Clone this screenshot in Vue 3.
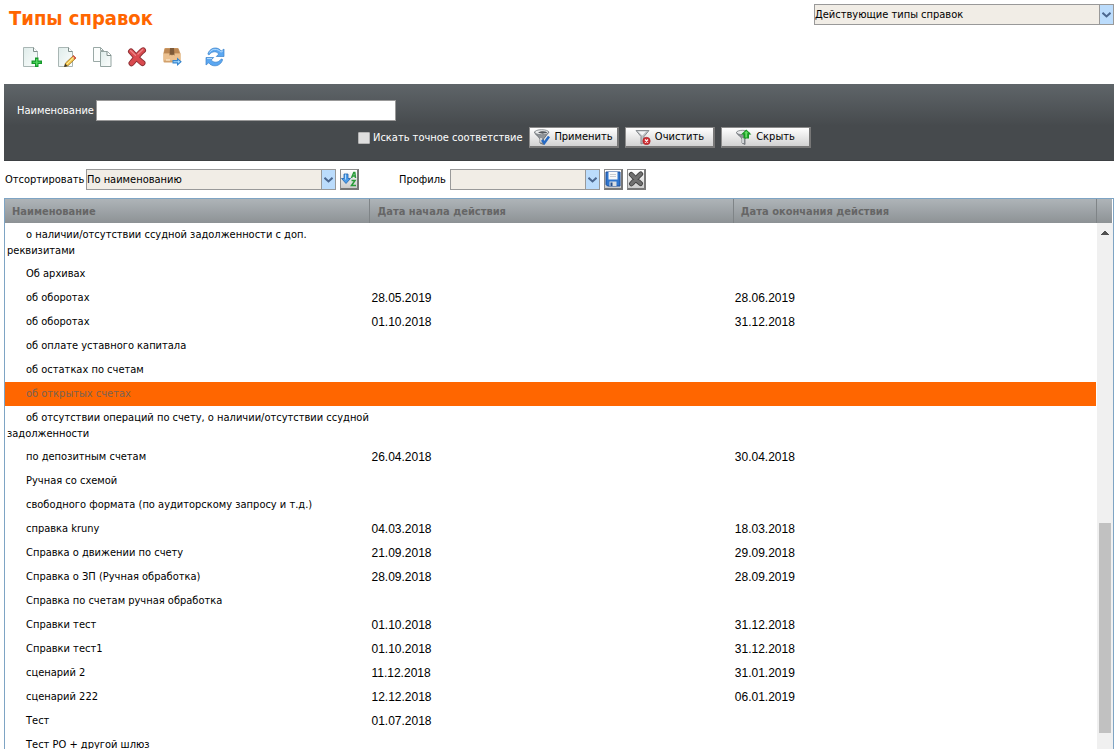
<script setup>
import { ref } from 'vue'

const status = ref('active')
const sortBy = ref('name')
const profile = ref('')
const nameFilter = ref('')
const exact = ref(false)
const selected = ref(6)

const rows = [
  { name: 'о наличии/отсутствии ссудной задолженности с доп.\nреквизитами', from: '', to: '' },
  { name: 'Об архивах', from: '', to: '' },
  { name: 'об оборотах', from: '28.05.2019', to: '28.06.2019' },
  { name: 'об оборотах', from: '01.10.2018', to: '31.12.2018' },
  { name: 'об оплате уставного капитала', from: '', to: '' },
  { name: 'об остатках по счетам', from: '', to: '' },
  { name: 'об открытых счетах', from: '', to: '' },
  { name: 'об отсутствии операций по счету, о наличии/отсутствии ссудной\nзадолженности', from: '', to: '' },
  { name: 'по депозитным счетам', from: '26.04.2018', to: '30.04.2018' },
  { name: 'Ручная со схемой', from: '', to: '' },
  { name: 'свободного формата (по аудиторскому запросу и т.д.)', from: '', to: '' },
  { name: 'справка kruny', from: '04.03.2018', to: '18.03.2018' },
  { name: 'Справка о движении по счету', from: '21.09.2018', to: '29.09.2018' },
  { name: 'Справка о ЗП (Ручная обработка)', from: '28.09.2018', to: '28.09.2019' },
  { name: 'Справка по счетам ручная обработка', from: '', to: '' },
  { name: 'Справки тест', from: '01.10.2018', to: '31.12.2018' },
  { name: 'Справки тест1', from: '01.10.2018', to: '31.12.2018' },
  { name: 'сценарий 2', from: '11.12.2018', to: '31.01.2019' },
  { name: 'сценарий 222', from: '12.12.2018', to: '06.01.2019' },
  { name: 'Тест', from: '01.07.2018', to: '' },
  { name: 'Тест РО + другой шлюз', from: '', to: '' },
]

const scroll = { top: 57, size: 40 }
</script>

<template>
  <main class="page">
    <header class="top">
      <h1>Типы справок</h1>
      <div class="combo combo-status">
        <select v-model="status" aria-label="Статус">
          <option value="active">Действующие типы справок</option>
        </select>
        <span class="arrow"><svg width="9" height="6" viewBox="0 0 9 6"><path d="M0.5 0.8 4.5 4.4 8.5 0.8" fill="none" stroke="#4b678f" stroke-width="2" /></svg></span>
      </div>
    </header>

    <nav class="toolbar" aria-label="Действия">
      <button type="button" aria-label="Создать">
        <svg width="20" height="20" viewBox="0 0 20 20">
          <defs><linearGradient id="paper" x1="0" y1="0" x2="1" y2="1"><stop offset="0" stop-color="#dfecea" /><stop offset="1" stop-color="#fcfefd" /></linearGradient></defs>
          <path d="M1.5 .5h10l4 4v15h-14z" fill="url(#paper)" stroke="#a9b6b4" />
          <path d="M11.5 .5v4h4" fill="#fff" stroke="#7e8e8b" />
          <path d="M13 10.5h3.5v3H20v3.5h-3.500v3H13v-3H9.500v-3.500H13z" fill="#16992c" />
          <path d="M14 12h1.500v2.700h3v1h-3v2.800H14v-2.800h-3v-1h3z" fill="#54d95f" />
        </svg>
      </button>
      <button type="button" aria-label="Изменить">
        <svg width="20" height="20" viewBox="0 0 20 20">
          <path d="M1.500 .5h10l4 4v15h-14z" fill="url(#paper)" stroke="#a9b6b4" />
          <path d="M11.500 .5v4h4" fill="#fff" stroke="#7e8e8b" />
          <path d="M8.500 16 16.500 8.500l2.500 2.500-8 7.700-3.500 1z" fill="#f4c64c" stroke="#9a7425" stroke-width=".8" />
          <path d="M15.200 9.700 16.500 8.300l2.700 2.700-1.500 1.500z" fill="#d8574f" />
          <path d="M10 17 17 10.300" stroke="#fff0a4" />
          <path d="m7.200 20 1-3.200 2.200 2.200z" fill="#333" />
        </svg>
      </button>
      <button type="button" aria-label="Копировать">
        <svg width="20" height="20" viewBox="0 0 20 20">
          <path d="M1.500 .5h7l3 3v11h-10z" fill="#fbfdfc" stroke="#9aa9a6" />
          <path d="M8.500 .5v3h3" fill="none" stroke="#9aa9a6" />
          <path d="M8.500 4.500h7l3.500 3.500v11.500H8.500z" fill="url(#paper)" stroke="#94a4a1" />
          <path d="M15 4.500v4h4" fill="#fff" stroke="#7e8e8b" />
        </svg>
      </button>
      <button type="button" aria-label="Удалить">
        <svg width="20" height="20" viewBox="0 0 20 20">
          <path d="M4 4.500C7 7.500 11 13 15.500 16M16 3.300C11 7 8.500 12 4.500 16.300" fill="none" stroke="#8c3034" stroke-width="6" stroke-linecap="round" />
          <path d="M4 4.500C7 7.500 11 13 15.500 16M16 3.300C11 7 8.500 12 4.500 16.300" fill="none" stroke="#d94a4f" stroke-width="4.200" stroke-linecap="round" />
          <path d="M3.500 3.500 8.500 8.300M15.800 2.600 11 7" fill="none" stroke="#ec8788" stroke-width="1.300" stroke-linecap="round" />
        </svg>
      </button>
      <button type="button" aria-label="Отправить">
        <svg width="20" height="20" viewBox="0 0 20 20">
          <path d="M3.500 1h12q1 0 1.300 1l1.700 4.500v8q0 1-1 1h-15q-1 0-1-1v-8L2.200 2q.3-1 1.300-1z" fill="#d2a06b" />
          <path d="M3.500 1.500h12.500l1.500 5h-16z" fill="#bd8854" />
          <path d="M1.500 6.500h17v7h-17z" fill="#ebc08f" />
          <path d="M8 1h4l.5 7.500-1.500-1-1 1-1-1-1.500 1z" fill="#7e5a38" />
          <path d="M4 13h4" stroke="#fff1da" />
          <path d="M10.500 13H15v-2.500l4.800 4.300L15 19v-2.500h-4.500z" fill="#3585cf" />
          <path d="M11.500 14.200H16v-1.300l2.200 1.900L16 16.600v-1.300h-4.500z" fill="#a9dcff" />
        </svg>
      </button>
      <button type="button" class="spaced" aria-label="Обновить">
        <svg width="20" height="20" viewBox="0 0 20 20">
          <path d="M3 6.500C4.500 2 9 0 13 1.500c1.500.6 2.500 1.500 3.300 2.500L19 2v7.500h-7.700L13.800 7C11.500 4 7 4 4.500 7.500 3.500 8 2.800 7.500 3 6.500z" fill="#5ba7f1" stroke="#3c82c9" stroke-width=".7" />
          <path d="M17.500 13C16 18 11 19.800 7 18.300c-1.500-.6-2.500-1.300-3.300-2.500L1 18v-7.500h7.700L6.200 13c2.500 3 7 3 9.500-.5 1-.7 2-.5 1.800.5z" fill="#5ba7f1" stroke="#3c82c9" stroke-width=".7" />
          <path d="M4.500 5.500c2.500-4 8-4.300 11.500-.3L18 3.700M2 11.500h5" fill="none" stroke="#b3dbff" />
        </svg>
      </button>
    </nav>

    <form class="filter" @submit.prevent>
      <div class="filter-row">
        <label for="name-filter">Наименование</label>
        <input id="name-filter" v-model="nameFilter" class="text" type="text">
      </div>
      <div class="filter-row filter-actions">
        <label class="check"><input v-model="exact" type="checkbox"><span>Искать точное соответствие</span></label>
        <button type="submit" class="btn">
          <svg width="16" height="16" viewBox="0 0 16 16">
            <path d="M.5 3C1 6 5.500 8 6 10v4l3.500 1.500V10L15 3z" fill="#8f9499" stroke="#5d6267" stroke-width=".8" />
            <path d="M7 9v4.500" stroke="#e9ebec" stroke-width="1.500" />
            <ellipse cx="7.700" cy="3.200" rx="7" ry="2.500" fill="#e9ebec" stroke="#777c80" stroke-width=".8" />
            <path d="M4 3.800c3-1.800 6-1.800 9.500-.6-3 1.800-6 1.800-9.500.6z" fill="#55595e" />
            <path d="m8 11 2.300 3L15 7.500" fill="none" stroke="#276bc4" stroke-width="2.500" />
          </svg>
          <span>Применить</span>
        </button>
        <button type="button" class="btn">
          <svg width="16" height="16" viewBox="0 0 16 16">
            <path d="M1 1.500h13L9 7.500v6l-3 1.500V7.500z" fill="#bfc3c6" stroke="#888c90" />
            <path d="M3 2.500h8L7.300 6.500z" fill="#f4f5f6" />
            <circle cx="11.500" cy="12" r="3.700" fill="#cf3034" stroke="#a51c23" stroke-width=".6" />
            <path d="m10 10.500 3 3m0-3-3 3" stroke="#fff" stroke-width="1.200" />
          </svg>
          <span>Очистить</span>
        </button>
        <button type="button" class="btn">
          <svg width="16" height="16" viewBox="0 0 16 16">
            <path d="M.5 3.500c1 3 5 4 5.500 6.500v4l3 1.500V10l5-6z" fill="#8f9499" stroke="#666b70" stroke-width=".8" />
            <path d="M7 9v5" stroke="#e9ebec" stroke-width="1.500" />
            <ellipse cx="6.500" cy="3.500" rx="6" ry="2.200" fill="#e8e9eb" stroke="#777c80" stroke-width=".8" />
            <path d="M7.500 9.500V5.500H5L10.200 .5l5.200 5H13v4z" fill="#169822" />
            <path d="M9.300 8.500V4.300H8l2.200-2.200 2.300 2.200h-1.300v4.200z" fill="#65dd65" />
          </svg>
          <span>Скрыть</span>
        </button>
      </div>
    </form>

    <div class="options">
      <label for="sort">Отсортировать</label>
      <div class="combo combo-sort">
        <select id="sort" v-model="sortBy">
          <option value="name">По наименованию</option>
        </select>
        <span class="arrow"><svg width="9" height="6" viewBox="0 0 9 6"><path d="M0.5 0.8 4.5 4.4 8.5 0.8" fill="none" stroke="#4b678f" stroke-width="2" /></svg></span>
      </div>
      <button type="button" class="mini" aria-label="Порядок сортировки">
        <svg width="16" height="16" viewBox="0 0 16 16">
          <path d="M3 3h4v4.500h2.500L5 12.500.5 7.500H3z" fill="#4b9cea" stroke="#2264ad" stroke-width=".8" />
          <path d="M4.500 3.500v5" stroke="#b4dcff" />
          <path d="M10.500 7 12.800 1.500h1L14.500 7M11.500 5h3" fill="none" stroke="#299b39" stroke-width="1.500" />
          <path d="M10.500 9.500h3.500l-3.500 5H15" fill="none" stroke="#299b39" stroke-width="1.500" />
        </svg>
      </button>
      <label for="profile" class="profile-label">Профиль</label>
      <div class="combo combo-profile">
        <select id="profile" v-model="profile"><option value=""></option></select>
        <span class="arrow"><svg width="9" height="6" viewBox="0 0 9 6"><path d="M0.5 0.8 4.5 4.4 8.5 0.8" fill="none" stroke="#4b678f" stroke-width="2" /></svg></span>
      </div>
      <button type="button" class="mini" aria-label="Сохранить профиль">
        <svg width="16" height="16" viewBox="0 0 16 16">
          <path d="M1 1h14v14H2.500L1 13.500z" fill="#2f76cf" stroke="#1c4f9c" />
          <path d="M3.500 1h9v7.500h-9z" fill="#f7f8f9" />
          <path d="M5 3.500h6M5 5.500h6" stroke="#c9ccd0" />
          <path d="M4.500 10.500h7V15h-7z" fill="#d9dde2" />
          <path d="M5.500 11.500h2V15h-2z" fill="#234f8e" />
        </svg>
      </button>
      <button type="button" class="mini" aria-label="Удалить профиль">
        <svg width="16" height="16" viewBox="0 0 16 16">
          <path d="M3.300 3.500C6 6 9 10 12.500 12.500M12.700 3C9 6 7 9.500 3.500 12.800" fill="none" stroke="#444" stroke-width="5" stroke-linecap="round" />
          <path d="M3.300 3.500C6 6 9 10 12.500 12.500M12.700 3C9 6 7 9.500 3.500 12.800" fill="none" stroke="#707070" stroke-width="3.200" stroke-linecap="round" />
        </svg>
      </button>
    </div>

    <section class="grid">
      <table>
        <colgroup><col class="c-name"><col class="c-date"><col></colgroup>
        <thead>
          <tr><th scope="col">Наименование</th><th scope="col">Дата начала действия</th><th scope="col">Дата окончания действия</th></tr>
        </thead>
        <tbody>
          <tr v-for="(row, i) in rows" :key="i" :class="{ selected: i === selected }" @click="selected = i">
            <td class="name">{{ row.name }}</td>
            <td class="date">{{ row.from }}</td>
            <td class="date">{{ row.to }}</td>
          </tr>
        </tbody>
      </table>
      <div class="side" aria-hidden="true">
        <div class="cap"></div>
        <div class="track">
          <svg class="up" width="8" height="4" viewBox="0 0 8 4" shape-rendering="crispEdges"><path d="M0 4V3h1V2h1V1h1V0h2v1h1v1h1v1h1v1z" fill="#505050" /></svg>
          <div class="thumb" :style="{ top: scroll.top + '%', height: scroll.size + '%' }"></div>
        </div>
      </div>
    </section>
  </main>
</template>

<style>
body {
  margin: 0;
  background: #fff;
}
</style>

<style scoped>
.page {
  box-sizing: border-box;
  display: flex;
  flex-direction: column;
  height: 100vh;
  padding: 4px 5px 0 4px;
  overflow: hidden;
  color: #000;
  font: 11px/16px Tahoma, "DejaVu Sans Condensed", "DejaVu Sans", sans-serif;
}
.page * {
  box-sizing: border-box;
}
button,
input,
select {
  margin: 0;
  color: inherit;
  font: inherit;
}
.top {
  display: flex;
  justify-content: space-between;
  align-items: flex-start;
  height: 40px;
}
h1 {
  margin: 0;
  padding-left: 5px;
  color: #f60;
  font-size: 20px;
  line-height: 28px;
}
.combo {
  position: relative;
  height: 21px;
}
.combo select {
  width: 100%;
  height: 100%;
  padding: 0 16px 0 0;
  border: 1px solid #999;
  border-radius: 0;
  background: #f1ede6;
  appearance: none;
}
.combo-status {
  width: 300px;
}
.combo-sort {
  width: 250px;
}
.combo-profile {
  width: 150px;
}
.arrow {
  position: absolute;
  top: 1px;
  right: 1px;
  bottom: 1px;
  display: flex;
  align-items: center;
  justify-content: center;
  width: 14px;
  border-left: 1px solid #999;
  background: #bbdcfc;
  pointer-events: none;
}
.toolbar {
  display: flex;
  gap: 15px;
  height: 40px;
  padding: 3px 0 0 18px;
}
.toolbar button {
  width: 20px;
  height: 20px;
  padding: 0;
  border: 0;
  background: none;
}
.toolbar svg,
.btn svg,
.mini svg {
  display: block;
  flex: none;
}
.toolbar .spaced {
  margin-left: 8px;
}
.filter {
  display: flex;
  flex-direction: column;
  gap: 6px;
  padding: 16px 13px 12px;
  border-bottom: 1px solid #3d4043;
  background: linear-gradient(#5f6569, #464a4d 55%);
  color: #fff;
}
.filter-row {
  display: flex;
  align-items: center;
  gap: 2px;
}
.text {
  width: 300px;
  height: 21px;
  padding: 0 2px;
  border: 1px solid #999;
  background: #fff;
  color: #000;
}
.filter-actions {
  gap: 6px;
  padding-left: 341px;
}
.check {
  display: flex;
  align-items: center;
  gap: 3px;
  width: 165px;
  white-space: nowrap;
}
.check input {
  width: 12px;
  height: 12px;
  border: 1px solid #b4b4b4;
  border-radius: 1px;
  background: #dedede;
  appearance: none;
}
.check input:checked {
  background: #f60;
}
.btn {
  display: flex;
  align-items: center;
  justify-content: center;
  gap: 4px;
  width: 90px;
  height: 21px;
  padding: 0;
  border: 1px solid #8c8c8c;
  border-right: 2px solid #777;
  border-bottom: 2px solid #777;
  background: linear-gradient(#fff, #d2d2d2);
  color: #000;
}
.options {
  display: flex;
  align-items: center;
  gap: 4px;
  padding: 8px 0 8px 1px;
}
.options > label:first-child {
  width: 77px;
  white-space: nowrap;
}
.mini {
  display: flex;
  align-items: center;
  justify-content: center;
  width: 19px;
  height: 21px;
  padding: 0;
  border: 1px solid #8c8c8c;
  border-right: 2px solid #777;
  border-bottom: 2px solid #777;
  background: linear-gradient(#fff, #ccc);
}
.profile-label {
  width: 47px;
  margin-left: 36px;
}
.grid {
  display: flex;
  flex: 1;
  min-height: 0;
  border: 1px solid #7ea4c4;
  border-bottom: 0;
  overflow: hidden;
}
table {
  flex: 1;
  align-self: flex-start;
  border-collapse: separate;
  border-spacing: 0;
  table-layout: fixed;
}
.c-name {
  width: 33.5%;
}
.c-date {
  width: 33.3%;
}
th {
  height: 24px;
  padding: 2px 7px 0;
  border-right: 1px solid #7f8487;
  background: linear-gradient(#aeb4b8, #8d9295);
  color: #666;
  font-weight: bold;
  text-align: left;
}
th:last-child {
  border-right: 0;
}
tbody tr {
  height: 24px;
}
td {
  padding: 4px 0 3px 2px;
  vertical-align: top;
}
.name {
  text-indent: 19px;
  white-space: pre;
}
.date {
  padding-left: 1px;
  font: 12px/16px Arial, "Liberation Sans", sans-serif;
}
.selected {
  background: #f60;
  color: #7a6252;
}
.side {
  display: flex;
  flex-direction: column;
  width: 17px;
}
.cap {
  height: 24px;
  margin-right: 1px;
  border-left: 1px solid #7f8487;
  background: linear-gradient(#aeb4b8, #8d9295);
}
.track {
  position: relative;
  flex: 1;
  margin-left: 1px;
  background: #f0f0f0;
}
.up {
  display: block;
  margin: 8px auto 0;
}
.thumb {
  position: absolute;
  right: 2px;
  left: 2px;
  background: #c1c1c1;
}
</style>
